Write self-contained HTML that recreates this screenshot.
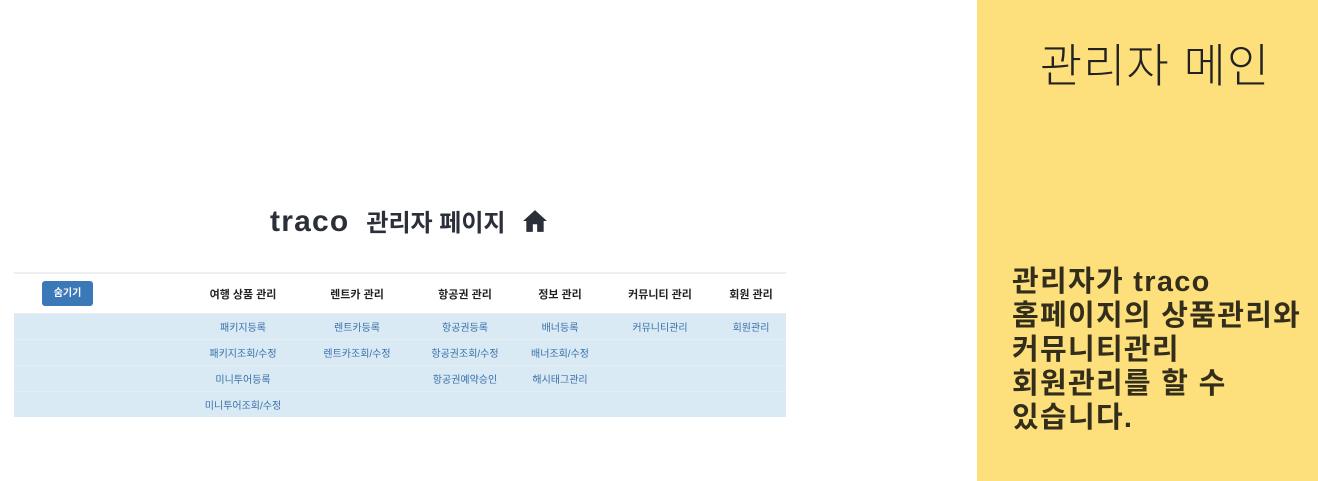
<!DOCTYPE html>
<html><head><meta charset="utf-8"><style>
body{margin:0;width:1318px;height:481px;background:#fff;position:relative;overflow:hidden;font-family:"Liberation Sans","Noto Sans CJK KR",sans-serif}
.side{position:absolute;left:977px;top:0;width:341px;height:481px;background:#fde07b}
.side h1{margin:0;position:absolute;top:30px;left:0;width:356px;text-align:center;font-weight:300;font-size:46px;color:#222;letter-spacing:1px}
.side p{margin:0;position:absolute;top:265px;left:35px;font-size:29px;font-weight:bold;line-height:34px;color:#332d1c;letter-spacing:1.3px;white-space:nowrap}
.title{position:absolute;top:203px;left:270px;font-weight:bold;color:#2b2f3a;white-space:nowrap}
.title .t{font-size:30px;letter-spacing:1.2px}
.title .k{font-size:24px;margin-left:17px}
table{position:absolute;left:14px;top:272px;width:772px;border-collapse:collapse;font-size:10px;table-layout:fixed}
td{text-align:center;padding:0;border-top:1px solid #e6ecf0;white-space:nowrap}
tr.h td{height:39px;font-weight:bold;color:#222;font-size:11px;background:#fff;border-top:2px solid #eceeef}
tr.r td{height:25px;background:#d9eaf5;color:#3a6fa8}
td.first{text-align:left}
.btn{display:inline-block;margin-left:28px;background:#3a78b8;color:#fff;border-radius:3px;width:51px;height:25px;line-height:25px;font-weight:bold;font-size:10px;text-align:center}
</style></head><body>
<div class="title"><span class="t">traco</span><span class="k">관리자 페이지</span>
<svg style="margin-left:12px;vertical-align:-2px" width="26" height="24" viewBox="0 0 24 22"><path d="M12 1 L1 11 L4 11 L4 21 L10 21 L10 14 L14 14 L14 21 L20 21 L20 11 L23 11 Z" fill="#2b2f3a"/></svg></div>
<table>
<colgroup><col style="width:172px"><col style="width:114px"><col style="width:114px"><col style="width:102px"><col style="width:88px"><col style="width:112px"><col style="width:70px"></colgroup>
<tr class="h"><td class="first"><span class="btn">숨기기</span></td><td>여행 상품 관리</td><td>렌트카 관리</td><td>항공권 관리</td><td>정보 관리</td><td>커뮤니티 관리</td><td>회원 관리</td></tr>
<tr class="r"><td></td><td>패키지등록</td><td>렌트카등록</td><td>항공권등록</td><td>배너등록</td><td>커뮤니티관리</td><td>회원관리</td></tr>
<tr class="r"><td></td><td>패키지조회/수정</td><td>렌트카조회/수정</td><td>항공권조회/수정</td><td>배너조회/수정</td><td></td><td></td></tr>
<tr class="r"><td></td><td>미니투어등록</td><td></td><td>항공권예약승인</td><td>해시태그관리</td><td></td><td></td></tr>
<tr class="r"><td></td><td>미니투어조회/수정</td><td></td><td></td><td></td><td></td><td></td></tr>
</table>
<div class="side"><h1>관리자 메인</h1>
<p>관리자가 traco<br>홈페이지의 상품관리와<br>커뮤니티관리<br>회원관리를 할 수<br>있습니다.</p></div>
</body></html>
